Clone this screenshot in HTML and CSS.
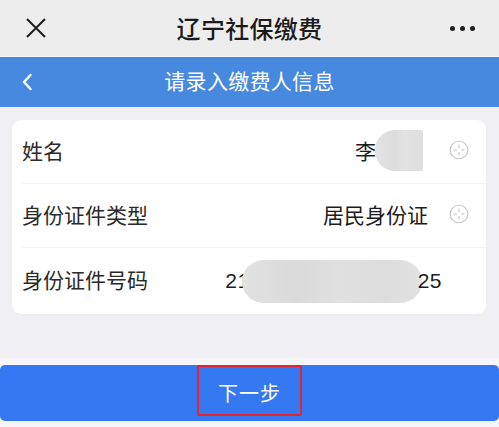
FILE: index.html
```html
<!DOCTYPE html>
<html lang="zh-CN">
<head>
<meta charset="utf-8">
<title>辽宁社保缴费</title>
<link rel="stylesheet" href="styles.css">
</head>
<body>
<div class="page">
  <header class="topbar">
    <span class="tb-close">
      <svg width="22" height="22" viewBox="0 0 22 22"><path d="M2 2L20 20M20 2L2 20" stroke="#1e1e1e" stroke-width="2" fill="none"/></svg>
    </span>
    <h1 class="tb-title">辽宁社保缴费</h1>
    <span class="tb-more"><i></i><i></i><i></i></span>
  </header>
  <div class="navbar">
    <span class="nav-back">
      <svg width="12" height="18" viewBox="0 0 12 18"><path d="M9.5 2L3 9l6.5 7" stroke="#fff" stroke-width="2.4" fill="none" stroke-linecap="round" stroke-linejoin="round"/></svg>
    </span>
    <h2 class="nav-title">请录入缴费人信息</h2>
  </div>
  <main class="main">
    <section class="card">
      <div class="row">
        <span class="label">姓名</span>
        <span class="value"><span>李</span><span class="blur blur-name"></span></span>
        <span class="add">
          <svg width="20" height="20" viewBox="0 0 20 20"><circle cx="10" cy="10" r="8.8" stroke="#c8c8c8" stroke-width="1.1" fill="none"/><path d="M10 4.5v3.5M10 12v3.5M4.5 10h3.5M12 10h3.5" stroke="#c8c8c8" stroke-width="1.1"/></svg>
        </span>
      </div>
      <div class="row">
        <span class="label">身份证件类型</span>
        <span class="value">居民身份证</span>
        <span class="add">
          <svg width="20" height="20" viewBox="0 0 20 20"><circle cx="10" cy="10" r="8.8" stroke="#c8c8c8" stroke-width="1.1" fill="none"/><path d="M10 4.5v3.5M10 12v3.5M4.5 10h3.5M12 10h3.5" stroke="#c8c8c8" stroke-width="1.1"/></svg>
        </span>
      </div>
      <div class="row row-id">
        <span class="label">身份证件号码</span>
        <span class="value id-value"><span>21</span><span class="blur blur-id"></span><span>25</span></span>
      </div>
    </section>
  </main>
  <footer class="footer">
    <button class="next"><span class="next-box">下一步</span></button>
  </footer>
</div>
</body>
</html>
```
FILE: styles.css
```css
* { box-sizing: border-box; }
html, body { margin: 0; padding: 0; }
body {
  width: 499px;
  height: 427px;
  overflow: hidden;
  font-family: "Liberation Sans", "Noto Sans CJK SC", sans-serif;
  background: #f7f7f9;
}
.page { display: flex; flex-direction: column; }

.topbar {
  height: 57px;
  background: #ededed;
  border-bottom: 1px solid #f6f6f6;
  display: flex;
  align-items: center;
  justify-content: space-between;
  padding: 0 24px 0 25px;
  position: relative;
}
.tb-close { display: flex; width: 22px; height: 22px; }
.tb-title {
  margin: 0;
  font-size: 24px;
  font-weight: 500;
  color: #1b1b1b;
  letter-spacing: 0.3px;
  position: absolute;
  left: 0; right: 0;
  text-align: center;
  top: 13px;
  line-height: 34px;
  pointer-events: none;
}
.tb-more { display: flex; gap: 5px; align-items: center; }
.tb-more i { width: 5px; height: 5px; border-radius: 50%; background: #1e1e1e; display: block; }

.navbar {
  height: 50px;
  background: #4689df;
  display: flex;
  align-items: center;
  position: relative;
  padding-left: 21px;
}
.nav-back { display: flex; }
.nav-title {
  margin: 0;
  position: absolute;
  left: 0; right: 0;
  text-align: center;
  font-size: 21px;
  font-weight: 400;
  color: #fff;
  line-height: 50px;
  top: 0;
  letter-spacing: 0.3px;
}

.main {
  height: 251px;
  background: #efeff4;
  padding: 13px 13px 0 12px;
}
.card {
  background: #fff;
  border-radius: 9px;
  padding: 0 0 0 10px;
}
.row {
  height: 64px;
  display: flex;
  align-items: center;
  border-bottom: 1px solid #f2f2f2;
  padding-right: 17px;
}
.row:last-child { border-bottom: none; height: 66px; }
.label {
  font-size: 21px;
  color: #2b2b2b;
  flex: 1;
  padding-bottom: 4px;
}
.value {
  font-size: 21px;
  color: #1c1c1c;
  display: flex;
  align-items: center;
  padding-bottom: 3px;
}
.add { display: flex; margin-left: 21px; padding-bottom: 4px; }
.blur {
  display: block;
  background: linear-gradient(90deg, #e4e4e4 0%, #dcdcdc 40%, #e2e2e2 60%, #dedede 100%);
}
.blur-name {
  width: 48px;
  height: 41px;
  border-radius: 20px 2px 2px 20px;
  margin-left: -1px;
  margin-right: 5px;
}
.row-id { padding-right: 44px; }
.id-value { letter-spacing: 0.5px; padding-bottom: 0; }
.blur-id {
  width: 180px;
  height: 43px;
  border-radius: 22px;
  margin: 0 -4px 0 -8px;
  background: linear-gradient(90deg, #e2e2e2 0%, #dadada 30%, #e0e0e0 55%, #dcdcdc 80%, #e3e3e3 100%);
}

.footer {
  padding: 7px 0 6px;
  background: #f6f6f8;
}
.next {
  width: 499px;
  height: 56px;
  border: none;
  border-radius: 5px;
  background: #3579f2;
  display: flex;
  align-items: center;
  justify-content: center;
  padding: 0;
  font-family: inherit;
}
.next-box {
  width: 105px;
  height: 51px;
  margin-bottom: 5px;
  border: 2px solid #e8232e;
  border-radius: 2px;
  display: flex;
  align-items: center;
  justify-content: center;
  color: #fff;
  font-size: 20px;
  letter-spacing: 1px;
  padding-top: 3px;
}
```
